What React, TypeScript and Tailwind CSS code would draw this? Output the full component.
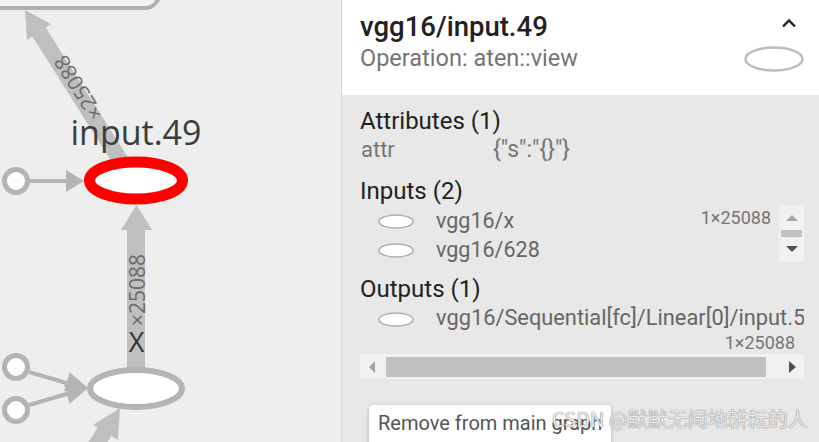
import React from "react";

function Graph() {
  const edge = "#bfbfbf";
  const node = "#b4b4b4";
  return (
    <svg width="341" height="442" className="block" style={{ fontFamily: "'Open Sans', sans-serif" }}>
      {/* top meta node */}
      <rect x="-30" y="-44" width="189" height="52" rx="14" fill="#f2f2f2" stroke="#b0b0b0" strokeWidth="4" />
      {/* diagonal edge */}
      <line x1="122" y1="163" x2="39" y2="32" stroke={edge} strokeWidth="16" />
      <polygon points="25,10 27,40 51,24" fill={edge} />
      <text
        transform="translate(78 88) rotate(-122.3)"
        textAnchor="middle"
        dominantBaseline="central"
        fontSize="21"
        fill="#6b6b6b"
      >
        ×25088
      </text>
      {/* node label */}
      <text x="136" y="145" textAnchor="middle" fontSize="34" fill="#3c3c3c">
        input.49
      </text>
      {/* left input circle */}
      <line x1="30" y1="181" x2="68" y2="181" stroke={node} strokeWidth="4" />
      <polygon points="84,181 66,170 66,192" fill={node} />
      <circle cx="16" cy="181" r="11.5" fill="#fff" stroke={node} strokeWidth="5" />
      {/* vertical edge */}
      <rect x="127" y="228" width="18" height="145" fill={edge} />
      <polygon points="136.5,205 121,230 152,230" fill={edge} />
      {/* selected node */}
      <ellipse cx="136" cy="180.5" rx="46.5" ry="18.5" fill="#fff" stroke="#ff0000" strokeWidth="11" />
      <text
        transform="translate(137 290) rotate(-90)"
        textAnchor="middle"
        dominantBaseline="central"
        fontSize="21"
        fill="#6b6b6b"
      >
        ×25088
      </text>
      <text x="136.5" y="352" textAnchor="middle" fontSize="27" fill="#333">
        X
      </text>
      {/* bottom inputs */}
      <line x1="29" y1="372" x2="70" y2="384" stroke={node} strokeWidth="4" />
      <line x1="29" y1="405" x2="70" y2="393" stroke={node} strokeWidth="4" />
      <polygon points="88,388 64.1,391.4 69.7,372.2" fill={node} />
      <polygon points="88,388 69.7,403.8 64.1,384.6" fill={node} />
      <circle cx="16" cy="367" r="11.5" fill="#fff" stroke={node} strokeWidth="5" />
      <circle cx="16" cy="410" r="11.5" fill="#fff" stroke={node} strokeWidth="5" />
      {/* bottom-left edge */}
      <line x1="105" y1="431" x2="84" y2="464" stroke={edge} strokeWidth="16" />
      <polygon points="120,408 93,425 118,440" fill={edge} />
      {/* bottom node */}
      <ellipse cx="136" cy="388.5" rx="46" ry="18.5" fill="#fff" stroke={node} strokeWidth="6" />
    </svg>
  );
}

function SmallEllipse() {
  return (
    <svg width="36" height="15" className="shrink-0 block">
      <ellipse cx="18" cy="7.5" rx="17" ry="6.5" fill="#fff" stroke="#b0b0b0" strokeWidth="1.5" />
    </svg>
  );
}

function Tri({ dir, color }: { dir: "up" | "down" | "left" | "right"; color: string }) {
  const pts =
    dir === "up"
      ? "0,6 6,0 12,6"
      : dir === "down"
      ? "0,0 12,0 6,6"
      : dir === "left"
      ? "6,0 6,12 0,6"
      : "0,0 0,12 7,6";
  const w = dir === "up" || dir === "down" ? 12 : 7;
  const h = dir === "up" || dir === "down" ? 6 : 12;
  return (
    <svg width={w} height={h} className="block">
      <polygon points={pts} fill={color} />
    </svg>
  );
}

export default function App() {
  return (
    <div className="relative flex w-[819px] h-[442px] overflow-hidden font-[Roboto,sans-serif]">
      <div className="w-[341px] h-full shrink-0 bg-[#eeeeee]">
        <Graph />
      </div>
      <div className="flex-1 flex flex-col border-l border-[#d6d6d6]">
        {/* header */}
        <div className="h-[95px] shrink-0 bg-white flex justify-between pl-[18px] pr-[15px]">
          <div className="flex flex-col pt-[11px]">
            <div className="text-[27.5px] leading-[32px] font-medium text-[#212121]">vgg16/input.49</div>
            <div className="mt-[2px] text-[23.5px] leading-[27px] text-[#757575]">Operation: aten::view</div>
          </div>
          <div className="w-[60px] flex flex-col items-end pt-[18px]">
            <svg width="16" height="10" className="block mr-[7px]">
              <polyline points="2,8.5 8,2.5 14,8.5" fill="none" stroke="#212121" strokeWidth="2.4" />
            </svg>
            <svg width="60" height="26" className="block mt-[18px]">
              <ellipse cx="30" cy="13" rx="28.5" ry="11.5" fill="none" stroke="#bdbdbd" strokeWidth="2.5" />
            </svg>
          </div>
        </div>
        {/* body */}
        <div className="flex-1 bg-[#e8e8e8] pl-[18px] pr-[15px] pt-[12px]">
          <div className="text-[24px] leading-[28px] text-[#212121]">Attributes (1)</div>
          <div className="mt-[2px] flex text-[22px] leading-[26px] text-[#757575]">
            <span className="w-[133px] pl-[1px]">attr</span>
            <span className="text-[23px]">{'{"s":"{}"}'}</span>
          </div>
          <div className="mt-[14px] text-[24px] leading-[28px] text-[#212121]">Inputs (2)</div>
          <div className="flex h-[58px]">
            <div className="flex-1 flex flex-col pt-[1px]">
              <div className="h-[29px] flex items-center">
                <div className="ml-[18px] mt-[2px]">
                  <SmallEllipse />
                </div>
                <span className="ml-[22px] text-[21.5px] leading-[29px] text-[#666]">vgg16/x</span>
                <span className="ml-auto mr-[8px] self-start mt-[2px] text-[18px] leading-[20px] text-[#757575]">
                  1×25088
                </span>
              </div>
              <div className="h-[29px] flex items-center">
                <div className="ml-[18px] mt-[2px]">
                  <SmallEllipse />
                </div>
                <span className="ml-[22px] text-[21.5px] leading-[29px] text-[#666]">vgg16/628</span>
              </div>
            </div>
            <div className="w-[25px] h-[57px] bg-[#f1f1f1] flex flex-col items-center pt-[10px]">
              <Tri dir="up" color="#a3a3a3" />
              <div className="mt-[9px] w-[21px] h-[7px] bg-[#c1c1c1]" />
              <div className="mt-[9px]">
                <Tri dir="down" color="#505050" />
              </div>
            </div>
          </div>
          <div className="mt-[12px] text-[24px] leading-[28px] text-[#212121]">Outputs (1)</div>
          <div className="w-[444px] overflow-hidden">
            <div className="h-[29px] flex items-center whitespace-nowrap">
              <div className="ml-[18px] mt-[3px] shrink-0">
                <SmallEllipse />
              </div>
              <span className="ml-[22px] text-[21.8px] leading-[29px] text-[#666]">
                vgg16/Sequential[fc]/Linear[0]/input.51
              </span>
            </div>
            <div className="mt-[1px] text-right pr-[9px] text-[18px] leading-[20px] text-[#757575]">1×25088</div>
          </div>
          <div className="mt-[1px] w-[444px] h-[25px] bg-[#f1f1f1] flex items-center">
            <div className="ml-[9px]">
              <Tri dir="left" color="#a3a3a3" />
            </div>
            <div className="ml-[10px] w-[380px] h-[20px] mt-[1px] bg-[#c1c1c1]" />
            <div className="ml-[23px]">
              <Tri dir="right" color="#505050" />
            </div>
          </div>
        </div>
      </div>
      {/* tooltip */}
      <div className="absolute left-[369px] top-[405px] w-[242px] h-[42px] bg-white rounded-[4px] shadow-[0_1px_4px_rgba(0,0,0,0.25)] pl-[9px] pt-[6px] text-[20px] leading-[24px] text-[#555] whitespace-nowrap">
        Remove from main graph
      </div>
      {/* watermark */}
      <div className="absolute left-[552px] top-[404px] text-[20px] leading-[30px] whitespace-nowrap text-[#e8e8e8] font-['Noto_Sans_CJK_SC',sans-serif] [text-shadow:0_0_1px_#888,0_0_1px_#888]">
        CSDN @默默无闻地耕耘的人
      </div>
    </div>
  );
}
